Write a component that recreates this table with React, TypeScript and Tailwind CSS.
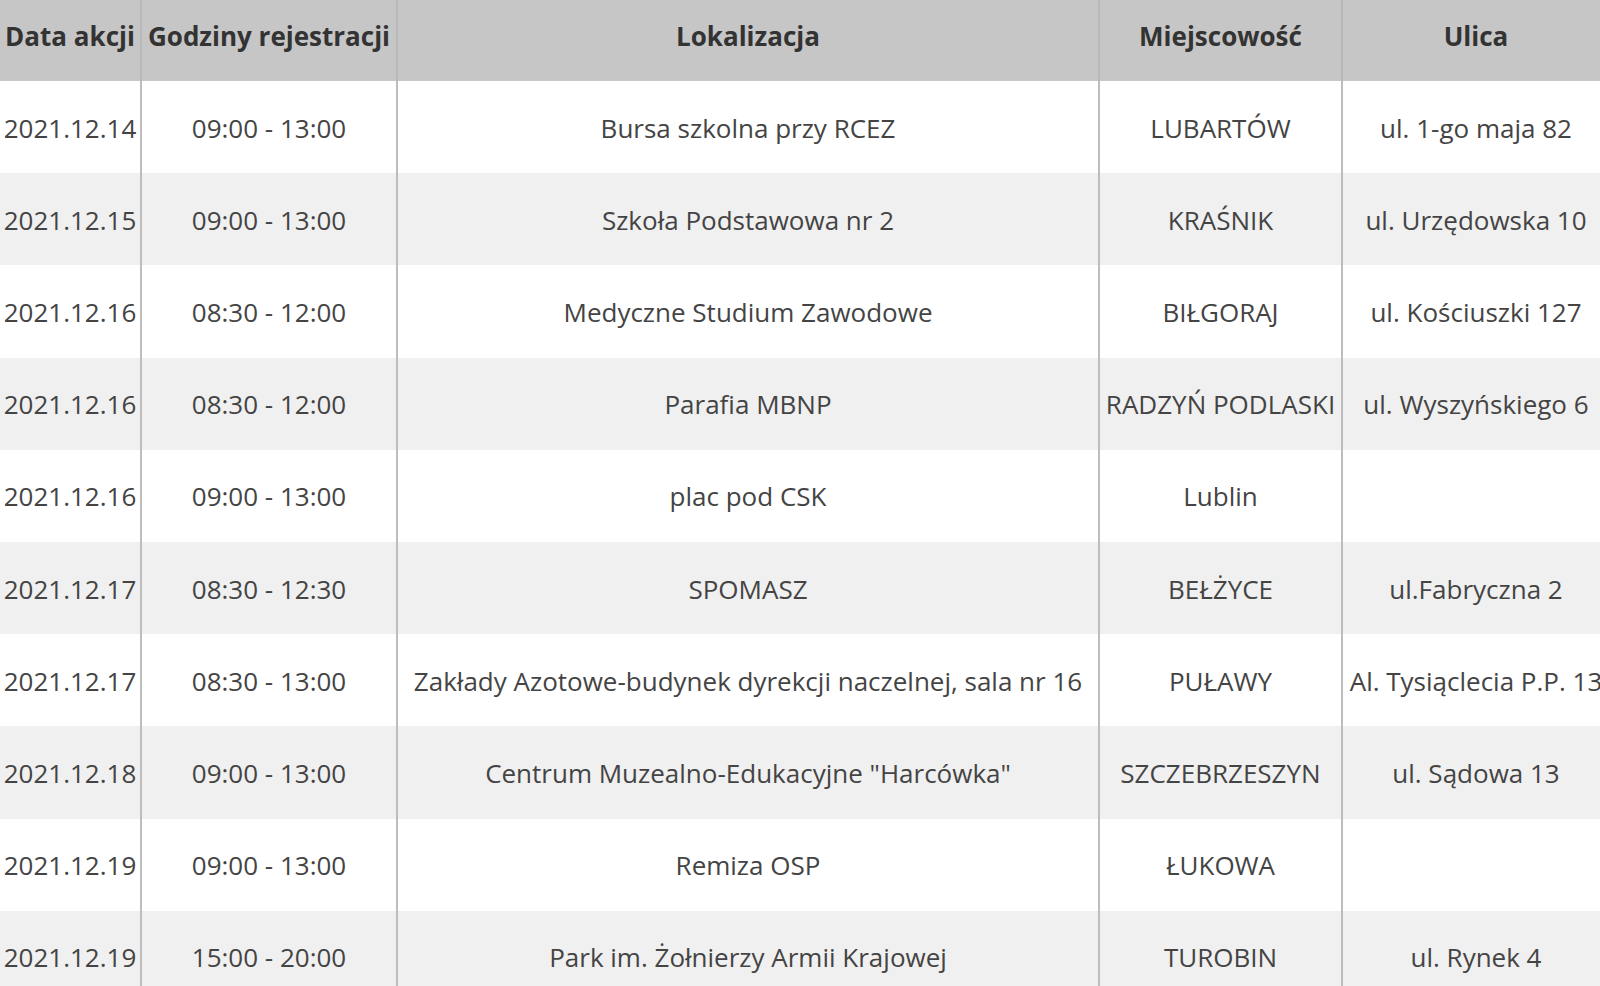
import React from 'react';

interface Row {
    date: string;
    hours: string;
    place: string;
    town: string;
    street: string;
}

const rows: Row[] = [
    { date: '2021.12.14', hours: '09:00 - 13:00', place: 'Bursa szkolna przy RCEZ', town: 'LUBARTÓW', street: 'ul. 1-go maja 82' },
    { date: '2021.12.15', hours: '09:00 - 13:00', place: 'Szkoła Podstawowa nr 2', town: 'KRAŚNIK', street: 'ul. Urzędowska 10' },
    { date: '2021.12.16', hours: '08:30 - 12:00', place: 'Medyczne Studium Zawodowe', town: 'BIŁGORAJ', street: 'ul. Kościuszki 127' },
    { date: '2021.12.16', hours: '08:30 - 12:00', place: 'Parafia MBNP', town: 'RADZYŃ PODLASKI', street: 'ul. Wyszyńskiego 6' },
    { date: '2021.12.16', hours: '09:00 - 13:00', place: 'plac pod CSK', town: 'Lublin', street: '' },
    { date: '2021.12.17', hours: '08:30 - 12:30', place: 'SPOMASZ', town: 'BEŁŻYCE', street: 'ul.Fabryczna 2' },
    { date: '2021.12.17', hours: '08:30 - 13:00', place: 'Zakłady Azotowe-budynek dyrekcji naczelnej, sala nr 16', town: 'PUŁAWY', street: 'Al. Tysiąclecia P.P. 13' },
    { date: '2021.12.18', hours: '09:00 - 13:00', place: 'Centrum Muzealno-Edukacyjne "Harcówka"', town: 'SZCZEBRZESZYN', street: 'ul. Sądowa 13' },
    { date: '2021.12.19', hours: '09:00 - 13:00', place: 'Remiza OSP', town: 'ŁUKOWA', street: '' },
    { date: '2021.12.19', hours: '15:00 - 20:00', place: 'Park im. Żołnierzy Armii Krajowej', town: 'TUROBIN', street: 'ul. Rynek 4' },
];

const headers = ['Data akcji', 'Godziny rejestracji', 'Lokalizacja', 'Miejscowość', 'Ulica'];

export default function App() {
    return (
        <div className="w-[1600px] h-[986px] overflow-hidden bg-white font-['Open_Sans',sans-serif] text-[26px] text-[#444444]">
            <table className="table-fixed border-collapse w-[1609px]">
                <colgroup>
                    <col className="w-[141px]" />
                    <col className="w-[256px]" />
                    <col className="w-[702px]" />
                    <col className="w-[243px]" />
                    <col className="w-[267px]" />
                </colgroup>
                <thead>
                    <tr className="bg-[#c6c6c6] h-[81px]">
                        {headers.map((h, i) => (
                            <th
                                key={h}
                                className={`font-bold text-[#333333] text-center whitespace-nowrap p-0 pb-[9px] ${i > 0 ? 'border-l-2 border-[#b8b8b8]' : ''}`}
                            >
                                {h}
                            </th>
                        ))}
                    </tr>
                </thead>
                <tbody>
                    {rows.map((r, idx) => (
                        <tr key={idx} className={`h-[92.2px] ${idx % 2 === 1 ? 'bg-[#f0f0f0]' : 'bg-white'}`}>
                            <td className="text-center whitespace-nowrap p-0 pt-[2px]">{r.date}</td>
                            <td className="text-center whitespace-nowrap p-0 pt-[2px] border-l-2 border-[#bdbdbd]">{r.hours}</td>
                            <td className="text-center whitespace-nowrap p-0 pt-[2px] border-l-2 border-[#bdbdbd]">{r.place}</td>
                            <td className="text-center whitespace-nowrap p-0 pt-[2px] border-l-2 border-[#bdbdbd]">{r.town}</td>
                            <td className="text-center whitespace-nowrap p-0 pt-[2px] border-l-2 border-[#bdbdbd]">{r.street}</td>
                        </tr>
                    ))}
                </tbody>
            </table>
        </div>
    );
}
